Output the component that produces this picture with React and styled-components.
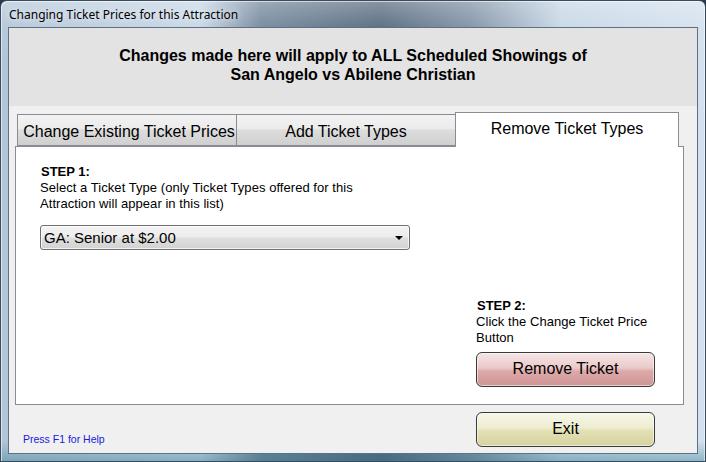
import styled, { createGlobalStyle } from "styled-components";

const GlobalStyle = createGlobalStyle`
  html, body {
    margin: 0;
    padding: 0;
    background: #2b3a4a;
  }
  * {
    box-sizing: border-box;
  }
`;

const Window = styled.div`
  width: 706px;
  height: 462px;
  display: flex;
  flex-direction: column;
  border: 1px solid #3a4b5e;
  border-radius: 7px 7px 0 0;
  padding: 0 7px 7px 7px;
  background:
    linear-gradient(180deg, rgba(255, 255, 255, 0.3) 0px, rgba(255, 255, 255, 0.08) 26px, rgba(255, 255, 255, 0) 60px),
    linear-gradient(180deg, rgba(0, 0, 0, 0) 440px, rgba(40, 120, 140, 0.45) 462px),
    linear-gradient(90deg, #b2c5d8 0px, #c6d6e5 200px, #71859a 260px, #53667c 380px, #7d90a4 470px, #c6d7e6 560px, #d4e1ee 706px);
  box-shadow: inset 1px 1px 0 rgba(255, 255, 255, 0.6), inset -1px 0 0 rgba(255, 255, 255, 0.5);
`;

const TitleBar = styled.div`
  height: 26px;
  display: flex;
  align-items: center;
  padding-left: 1px;
  font-family: "Noto Sans", "Open Sans", sans-serif;
  font-size: 12px;
  color: #000;
  text-shadow: 0 0 6px rgba(255, 255, 255, 0.9);
`;

const Client = styled.div`
  flex: 1;
  display: flex;
  flex-direction: column;
  border: 1px solid #5f7083;
  background: #f0f0f0;
  font-family: "Liberation Sans", Arial, sans-serif;
  color: #000;
`;

const Header = styled.div`
  height: 78px;
  background: #e3e3e3;
  padding-top: 18px;
  text-align: center;
  font-size: 16px;
  font-weight: bold;
  line-height: 19px;
`;

const Body = styled.div`
  padding: 6px 13px 0 6px;
  display: flex;
  flex-direction: column;
`;

const TabRow = styled.div`
  display: flex;
  align-items: flex-end;
  padding-left: 2px;
  height: 34px;
  position: relative;
  z-index: 1;
`;

const Tab = styled.div`
  width: ${(p) => p.$w}px;
  height: ${(p) => (p.$active ? 35 : 32)}px;
  margin-left: ${(p) => (p.$first ? 0 : -1)}px;
  margin-bottom: ${(p) => (p.$active ? -1 : 0)}px;
  display: flex;
  align-items: center;
  justify-content: center;
  padding-top: ${(p) => (p.$active ? 0 : 3)}px;
  padding-bottom: ${(p) => (p.$active ? 3 : 0)}px;
  padding-left: ${(p) => (p.$first ? 4 : 0)}px;
  font-size: 16px;
  border: 1px solid #898c95;
  border-bottom: ${(p) => (p.$active ? "none" : "1px solid #898c95")};
  background: ${(p) =>
    p.$active
      ? "#ffffff"
      : "linear-gradient(180deg, #f3f3f3 0%, #ebebeb 45%, #dddddd 50%, #cfcfcf 100%)"};
  white-space: nowrap;
`;

const Panel = styled.div`
  height: 259px;
  background: #fff;
  border: 1px solid #898c95;
  display: grid;
  grid-template-columns: 370px 179px;
  justify-content: space-between;
  padding: 17px 28px 17px 24px;
`;

const Column = styled.div`
  display: flex;
  flex-direction: column;
  justify-content: ${(p) => (p.$bottom ? "flex-end" : "flex-start")};
`;

const Step = styled.div`
  font-size: 13px;
  font-weight: bold;
  line-height: 16px;
  padding-left: 1px;
`;

const Note = styled.div`
  font-size: 13px;
  line-height: 16px;
  letter-spacing: 0.05px;
`;

const Combo = styled.div`
  margin-top: 13px;
  height: 25px;
  border: 1px solid #707070;
  border-radius: 3px;
  display: flex;
  align-items: center;
  justify-content: space-between;
  padding: 0 6px 0 3px;
  font-size: 15px;
  background: linear-gradient(180deg, #f4f4f4 0%, #ececec 48%, #dfdfdf 52%, #d2d2d2 100%);
  box-shadow: inset 0 0 0 1px rgba(255, 255, 255, 0.7);
`;

const Arrow = styled.span`
  width: 0;
  height: 0;
  border-left: 4px solid transparent;
  border-right: 4px solid transparent;
  border-top: 4px solid #000;
`;

const Button = styled.div`
  height: 35px;
  width: 179px;
  margin-top: ${(p) => p.$mt || 0}px;
  border: 1px solid #3a3a3a;
  border-radius: 6px;
  display: flex;
  align-items: center;
  justify-content: center;
  padding-bottom: 1px;
  font-size: 16px;
  background: ${(p) =>
    p.$tone === "red"
      ? "linear-gradient(180deg, #f6e6e6 0%, #ecc9c9 45%, #dca9a9 55%, #cf9494 100%)"
      : "linear-gradient(180deg, #f7f7ea 0%, #eeecd0 45%, #e2dfb4 55%, #d6d29e 100%)"};
  box-shadow: inset 0 0 0 1px rgba(255, 255, 255, 0.55);
`;

const Footer = styled.div`
  flex: 1;
  display: flex;
  justify-content: space-between;
  align-items: flex-start;
  padding: 7px 42px 0 14px;
`;

const Help = styled.div`
  align-self: flex-end;
  margin-bottom: 8px;
  font-family: "Liberation Sans", Tahoma, sans-serif;
  font-size: 10.5px;
  color: #1a1ae0;
`;

export default function App() {
  return (
    <>
      <GlobalStyle />
      <Window>
        <TitleBar>Changing Ticket Prices for this Attraction</TitleBar>
        <Client>
          <Header>
            Changes made here will apply to ALL Scheduled Showings of
            <br />
            San Angelo vs Abilene Christian
          </Header>
          <Body>
            <TabRow>
              <Tab $first $w={220}>Change Existing Ticket Prices</Tab>
              <Tab $w={220}>Add Ticket Types</Tab>
              <Tab $active $w={224}>Remove Ticket Types</Tab>
            </TabRow>
            <Panel>
              <Column>
                <Step>STEP 1:</Step>
                <Note>
                  Select a Ticket Type (only Ticket Types offered for this
                  <br />
                  Attraction will appear in this list)
                </Note>
                <Combo>
                  <span>GA: Senior at $2.00</span>
                  <Arrow />
                </Combo>
              </Column>
              <Column $bottom>
                <Step>STEP 2:</Step>
                <Note>
                  Click the Change Ticket Price
                  <br />
                  Button
                </Note>
                <Button $tone="red" $mt={6}>Remove Ticket</Button>
              </Column>
            </Panel>
          </Body>
          <Footer>
            <Help>Press F1 for Help</Help>
            <Button $tone="yellow">Exit</Button>
          </Footer>
        </Client>
      </Window>
    </>
  );
}
